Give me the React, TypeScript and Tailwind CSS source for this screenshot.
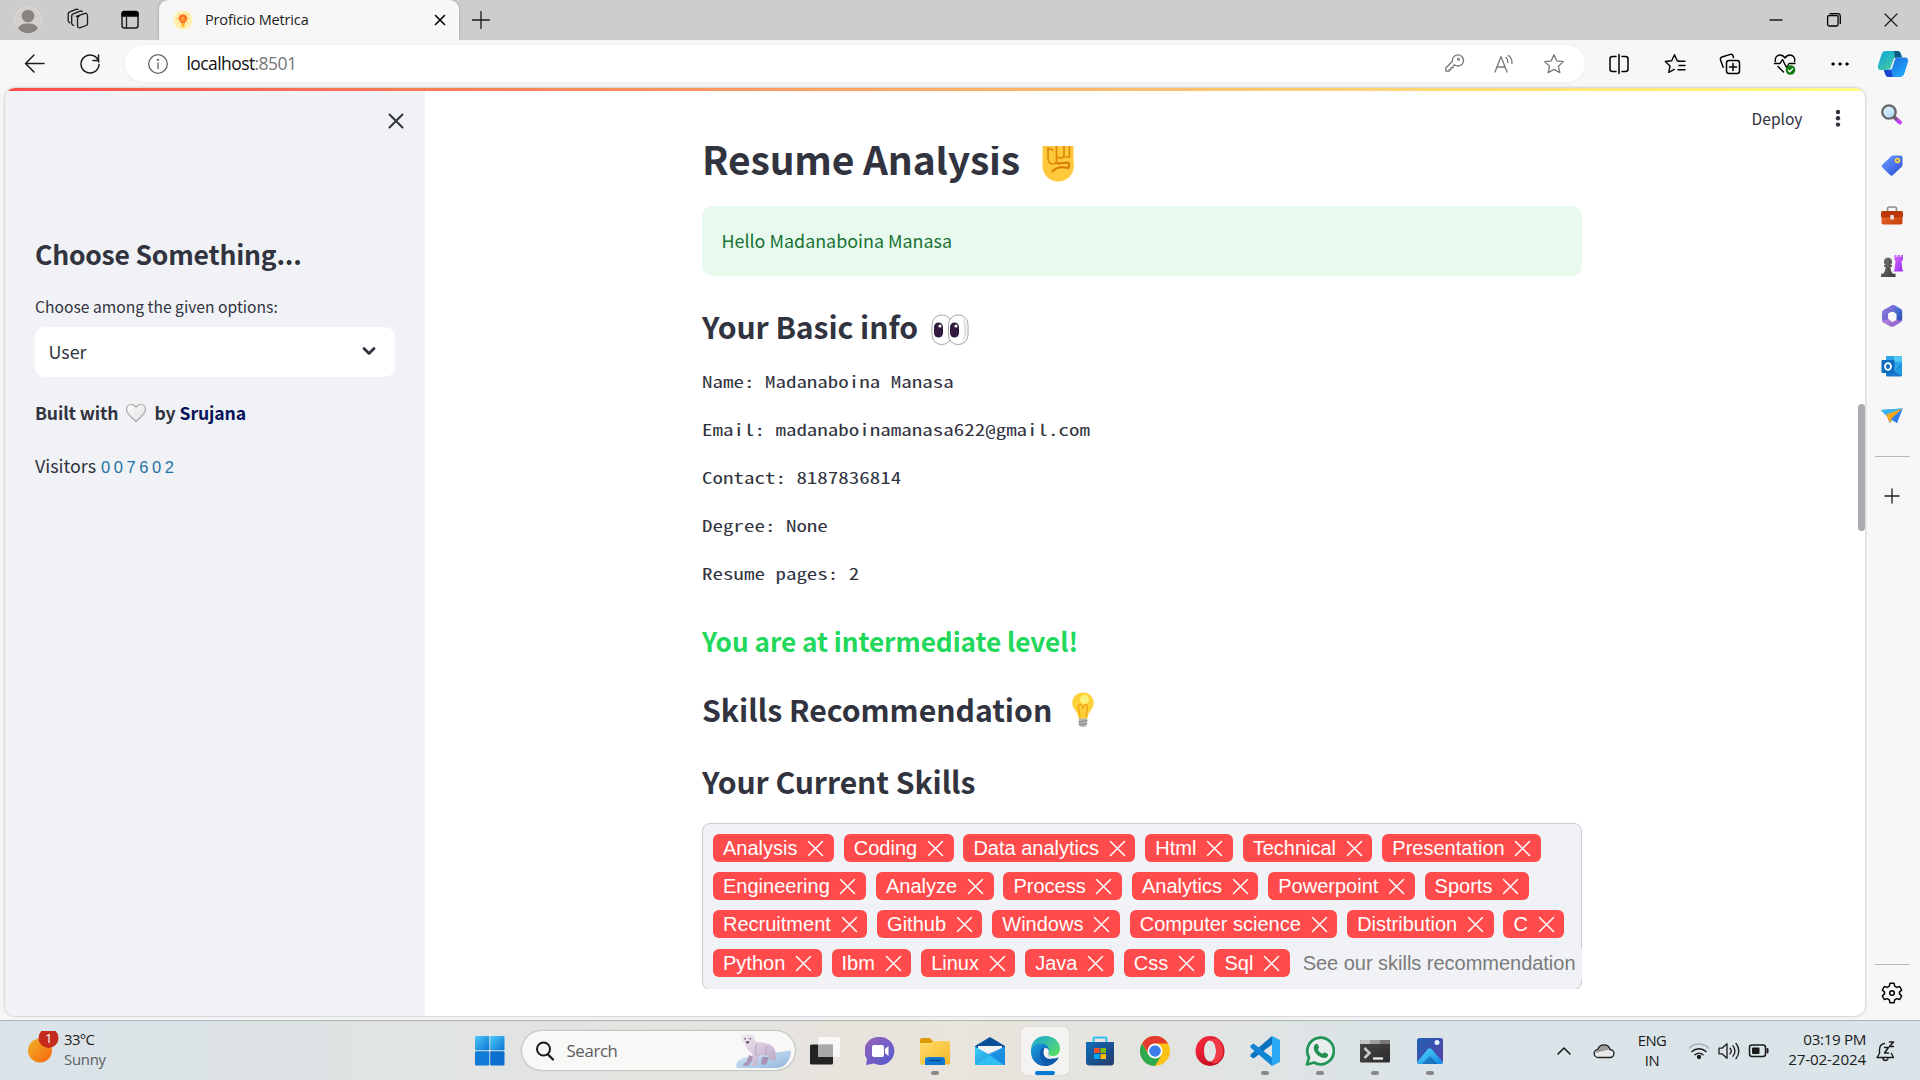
import type { ReactNode } from "react";

const SOURCE = "font-['Noto_Sans_CJK_SC',sans-serif]";
const SEGOE = "font-['Open_Sans',sans-serif]";

type IconProps = { w?: number; h?: number; children: ReactNode; className?: string };

/** Line icon drawn on a canvas whose units are CSS pixels. */
function Line({ w = 24, h = 24, children, className = "" }: IconProps) {
  return (
    <svg
      width={w}
      height={h}
      viewBox={`0 0 ${w} ${h}`}
      fill="none"
      stroke="currentColor"
      strokeWidth="1.3"
      strokeLinecap="round"
      strokeLinejoin="round"
      className={`shrink-0 ${className}`}
    >
      {children}
    </svg>
  );
}

function Art({ w = 30, h = 30, children, className = "" }: IconProps) {
  return (
    <svg width={w} height={h} viewBox={`0 0 ${w} ${h}`} className={`shrink-0 ${className}`}>
      {children}
    </svg>
  );
}

function Gradients() {
  const list: [string, string, string][] = [
    ["gSun", "#f0b429", "#f7630c"],
    ["gWin", "#4cc9f7", "#0a74d6"],
    ["gChat", "#9a63b8", "#4f5bd0"],
    ["gFolder", "#ffdc6b", "#f7b928"],
    ["gMail", "#40d0f5", "#1480d8"],
    ["gStore", "#0f6cbd", "#243a66"],
    ["gEdgeTop", "#1ba4dc", "#5de45a"],
    ["gEdgeBody", "#1a9de0", "#0c4a9c"],
    ["gOpera", "#ff3040", "#b00018"],
    ["gPhotos", "#1f62b5", "#5a3fa6"],
    ["gMount", "#4fdcff", "#1287e0"],
    ["gTerm", "#4a4a4a", "#2b2b2b"],
    ["gTag", "#6aa2ff", "#2c49dc"],
    ["gBox", "#ef7034", "#c23c08"],
    ["gRook", "#d46bff", "#9a2ef0"],
    ["gPawn", "#777777", "#3c3c3c"],
    ["gLens", "#e4f6ff", "#a9d6f4"],
    ["gM1", "#5b9cf0", "#2f3fae"],
    ["gM2", "#8f7fe0", "#5a58c8"],
    ["gM3", "#c58be0", "#7a58c8"],
    ["gCop1", "#0aa5d8", "#58d39a"],
    ["gCop2", "#1f5bd8", "#1fb5ff"],
    ["gBear", "#f2e8f2", "#b9a4c4"],
    ["gIce", "#dcebf8", "#8fb6de"],
    ["gHeart", "#ffffff", "#dedede"],
  ];
  return (
    <svg width="0" height="0" className="absolute">
      <defs>
        {list.map(([id, a, b]) => (
          <linearGradient key={id} id={id} x1="0" y1="0" x2="1" y2="1">
            <stop offset="0" stopColor={a} />
            <stop offset="1" stopColor={b} />
          </linearGradient>
        ))}
      </defs>
    </svg>
  );
}

function TabStrip() {
  return (
    <div className="flex h-10 shrink-0 items-center bg-[#cdcdcd] text-[#1b1b1b]">
      <div className="flex w-[159px] items-center pl-[14px]">
        <Art w={28} h={28}>
          <circle cx="14" cy="14" r="13.5" fill="#d3d0cb" stroke="#dedbd7" />
          <circle cx="14" cy="10" r="6.3" fill="#8a8480" />
          <path d="M4 22.500C5.500 18.800 9 17.500 14 17.500s8.500 1.300 10 5A13 13 0 0 1 4 22.500z" fill="#8a8480" />
        </Art>
        <Line w={24} h={24} className="ml-[24px]">
          <path d="M9.300 8.700l8-2.700a2 2 0 0 1 3.200 1.500v8.500a2 2 0 0 1-1.300 1.800l-6 2.200a2 2 0 0 1-2.700-1.800v-7.400a2.300 2.300 0 0 1 1.500-2.200z" transform="translate(1 -.3)" />
          <path d="M7.500 17.300l-.8-.4a2 2 0 0 1-1-1.800V8a2.300 2.300 0 0 1 1.500-2.200l7-2.700a2 2 0 0 1 2 .4" />
          <path d="M3.800 14.800l-.8-.6a2 2 0 0 1-.8-1.600V6a2.300 2.300 0 0 1 1.500-2.200L10 1.300a2 2 0 0 1 2 .3" />
        </Line>
        <Line w={20} h={20} className="ml-[30px]">
          <rect x="2" y="2" width="16" height="16" rx="2.500" strokeWidth="1.500" />
          <path d="M2 3.500C2 2 3 1.500 4 1.500h12c1 0 2 .5 2 2V6H2z" fill="#000" stroke="#000" />
          <path d="M6.500 6v12" />
        </Line>
      </div>
      <div className="flex h-10 w-[300px] items-center rounded-t-[9px] bg-[#f7f7f7] pr-[12.500px] pl-[14px] shadow-[0_0_3px_rgba(0,0,0,0.25)]">
        <Art w={20} h={20}>
          <circle cx="10" cy="10" r="9.500" fill="#fff0ae" />
          <path d="M10 4.200a4.300 4.300 0 0 0-2.300 7.900l.5 1.400h3.600l.5-1.400A4.300 4.300 0 0 0 10 4.200z" fill="#ff6d1f" />
          <path d="M9 11V8.300a1 1 0 0 1 2 0V11" stroke="#ffd04f" fill="none" />
          <path d="M8.300 13.800h3.400v1.800a1.700 1.700 0 0 1-3.400 0z" fill="#fbb82a" />
          <path d="M3.800 8.500h1M15.200 8.500h1M5.500 4.300l.7.700M14.500 4.300l-.7.700M5.500 12.500l.7-.6M14.500 12.500l-.7-.6" stroke="#ff8c2e" />
        </Art>
        <span className={`${SEGOE} ml-[12px] text-[14.500px] tracking-[-0.15px]`}>Proficio Metrica</span>
        <Line w={14} h={14} className="ml-auto text-black">
          <path d="M2.500 2.500l9 9M11.500 2.500l-9 9" strokeWidth="1.600" />
        </Line>
      </div>
      <Line w={20} h={20} className="ml-[12px]">
        <path d="M10 1.500v17M1.500 10h17" />
      </Line>
      <div className="ml-auto flex items-center gap-[41.500px] pr-[21px]">
        <Line w={16} h={16} className="text-black">
          <path d="M1.500 8h13" strokeLinecap="butt" />
        </Line>
        <Line w={16} h={16} className="text-black">
          <rect x="1.600" y="3.500" width="10.500" height="10.500" rx="1.500" />
          <path d="M4 1.600h7.500a2.800 2.800 0 0 1 2.800 2.800V11.500" />
        </Line>
        <Line w={16} h={16}>
          <path d="M2 2l12 12M14 2L2 14" strokeWidth="1.200" />
        </Line>
      </div>
    </div>
  );
}

function Toolbar() {
  return (
    <div className="flex h-12 shrink-0 items-center bg-[#f7f7f7] pr-[12px] pb-[1px] text-[#1b1b1b]">
      <Line w={24} h={24} className="ml-[23px]">
        <path d="M21 11.500H2.500M11 3l-8.500 8.500L11 20" strokeWidth="1.500" />
      </Line>
      <Line w={24} h={24} className="ml-[31px]">
        <path d="M20.800 10A9 9 0 1 0 21 12.500M20.500 3v5.500H15" strokeWidth="1.500" />
      </Line>
      <div className="ml-[23px] flex h-[37px] w-[1460px] items-center rounded-full bg-white pr-[20px] pl-[21px] text-[#777] shadow-[0_0_4px_rgba(0,0,0,0.06)]">
        <Line w={22} h={22} className="ml-px text-[#666]">
          <circle cx="11" cy="11" r="9.300" />
          <path d="M11 10v5.500" />
          <circle cx="11" cy="6.800" r=".5" fill="currentColor" />
        </Line>
        <span className={`${SEGOE} ml-[17.500px] text-[17.500px] tracking-[-0.58px]`}>
          <span className="text-[#111]">localhost</span>:8501
        </span>
        <div className="ml-auto flex items-center gap-[28px]">
          <Line w={22} h={22}>
            <path d="M13.500 3.200a5.500 5.500 0 1 1-2 9.500l-1.500 1.500v1.500H8v2H6.200v1.500H2.800V16l6.500-6.500a5.500 5.500 0 0 1 4.200-6.300z" transform="translate(0 -1)" />
            <circle cx="15.500" cy="6.200" r=".9" />
          </Line>
          <Line w={22} h={22}>
            <path d="M2 19L8 3.500 14 19M4 14h8M13 4.500a6 6 0 0 1 2 5M15.500 2.500a9.500 9.500 0 0 1 3.500 8" />
          </Line>
          <Line w={22} h={22}>
            <path d="M11 1.800l2.800 6 6.500.8-4.800 4.500 1.300 6.500-5.800-3.200-5.800 3.200 1.300-6.500L1.700 8.600l6.500-.8z" />
          </Line>
        </div>
      </div>
      <div className="flex w-[323px] items-center pl-[23px] text-black">
        <Line w={22} h={22}>
          <path d="M11 1.500v19M8 3.500H4.500a2.500 2.500 0 0 0-2.500 2.500v10a2.500 2.500 0 0 0 2.500 2.500H8M14 3.500h3.500A2.500 2.500 0 0 1 20 6v10a2.500 2.500 0 0 1-2.500 2.500H14" strokeWidth="1.500" />
        </Line>
        <Line w={24} h={24} className="ml-[34px]">
          <path d="M14.500 9l-1.300-.3-2.700-6-2.800 6-6.400.8 4.700 4.500-1.200 6.400 5.500-3M14 9.200h7M15 13.500h6M14 17.800h7" strokeWidth="1.400" />
        </Line>
        <Line w={24} h={24} className="ml-[30px]">
          <rect x="8.500" y="8.500" width="13" height="13" rx="2.500" strokeWidth="1.500" />
          <path d="M15 11.500v7M11.500 15h7M15.500 5.500l-.6-1.800a2 2 0 0 0-2.500-1.300L4 5a2.300 2.300 0 0 0-1.500 2.900l2.700 7.300" strokeWidth="1.500" />
        </Line>
        <Line w={24} h={24} className="ml-[31px]">
          <path d="M2.500 9.500C1.500 5.800 4 3 7 3c2.300 0 3.800 1.300 5 3 1.200-1.700 2.700-3 5-3 3 0 5.500 2.800 4.500 6.500M1.500 11.500H7l2.500-4 4 8 2.500-4h6M5 14.500l5.500 5.500" strokeWidth="1.400" />
          <circle cx="17.500" cy="18" r="4.800" fill="#107c10" stroke="none" />
          <path d="M15.300 18.200l1.500 1.500 2.800-3" stroke="#fff" />
        </Line>
        <Line w={20} h={20} className="ml-[33px]">
          <g fill="currentColor" strokeWidth=".6">
            <circle cx="3" cy="10" r="1.300" />
            <circle cx="10" cy="10" r="1.300" />
            <circle cx="17" cy="10" r="1.300" />
          </g>
        </Line>
        <Art w={32} h={28} className="ml-[26.500px]">
          <path d="M9 1h11a4 4 0 0 1 3.800 3l1 3.500h-5c-2 0-3 1-3.600 3L14 16.500c-.8 2.500-2 3.500-4.500 3.500H4c-2.500 0-3.700-2-3-4.500L4.500 4.500C5.300 2 6.800 1 9 1z" fill="url(#gCop1)" />
          <path d="M17 1h4a4 4 0 0 1 3 3l1 3.500h-5l-2 1z" fill="#0b5d86" />
          <path d="M23 27H12a4 4 0 0 1-3.800-3L7 20.500h4.500c2 0 3.200-1 3.900-3l2-6.500c.8-2.500 2-3.500 4.500-3.500H28c2.500 0 3.700 2 3 4.500L27.500 23c-.8 2.500-2.300 4-4.500 4z" fill="url(#gCop2)" />
          <path d="M7 20h4.500l2-.7L16 27h-4a4 4 0 0 1-3.800-3z" fill="#1746cf" />
        </Art>
      </div>
    </div>
  );
}

function Sidebar() {
  return (
    <aside className={`${SOURCE} flex w-[420px] shrink-0 flex-col bg-[#f0f2f6] px-[30px] text-[#31333f]`}>
      <div className="mt-[19.500px] flex justify-end">
        <Line w={20} h={20} className="-mr-[10.500px]">
          <path d="M3.500 3.500l13 13M16.500 3.500l-13 13" strokeWidth="2" />
        </Line>
      </div>
      <h2 className="mt-[103px] h-10 text-[26.500px] leading-10 font-semibold tracking-[-0.2px]">Choose Something...</h2>
      <p className="mt-[23px] h-5 text-[15.650px] leading-5">Choose among the given options:</p>
      <div className="mt-[10.500px] flex h-[50px] items-center justify-between rounded-[10px] bg-white pr-[18px] pb-[2px] pl-[13.500px]">
        <span className="text-[17.900px] leading-6">User</span>
        <Line w={16} h={16}>
          <path d="M3 5.500l5 5 5-5" strokeWidth="2.800" />
        </Line>
      </div>
      <p className="mt-[26px] flex h-5 items-center text-[17.600px] leading-5 font-semibold tracking-[-0.12px]">
        <span>Built with</span>
        <Art w={22} h={20} className="mx-[7px]">
          <path d="M11 18.500C5.500 14 1.500 10.500 1.500 6.500c0-2.800 2-5 4.700-5 2 0 3.700 1 4.800 2.800 1.100-1.800 2.800-2.800 4.800-2.800 2.700 0 4.700 2.200 4.700 5 0 4-4 7.500-9.500 12z" fill="url(#gHeart)" stroke="#a9a9a9" strokeWidth="1.200" />
        </Art>
        <span>by</span>
        <span className="ml-[4px] text-[#05115a]">Srujana</span>
      </p>
      <p className="mt-[31.500px] flex h-5 items-center text-[17.900px] leading-5">
        Visitors
        <span className="mt-[4px] ml-[5px] font-['Liberation_Sans',sans-serif] text-[16.500px] tracking-[3.550px] text-[#2273a5]">007602</span>
      </p>
    </aside>
  );
}

function Fist() {
  return (
    <Art w={34} h={54} className="mt-[2px] ml-[21.500px]">
      <path d="M1.500 2h31v26.500l.5 5c0 9-7 16-16 16S1.500 42.500 1.500 33.500z" fill="#ffc83d" />
      <path d="M7 15v10c0 4.500 1.500 7 4.500 7s4-1.500 4-3.500V13M15.500 23c0 2.500 1.500 3 3.500 3s4-.5 4-3V13M23 25h5.500V13M7 19c1-3 4-3 5 0" fill="none" stroke="#dd8a06" strokeWidth="1.700" />
      <path d="M15.500 31c4 1.500 7-.5 11.500-.5 1.500.5 1.500 3.500 0 6.500M27 36c-7-1.500-12-1-16 4" fill="none" stroke="#d67d00" strokeWidth="2" />
    </Art>
  );
}

function Eyes() {
  return (
    <Art w={38} h={32} className="mt-[8px] ml-[13px]">
      <g stroke="#a5a5a5" fill="#fff">
        <rect x="1" y="1" width="19.500" height="29.500" rx="9.500" />
        <rect x="17.500" y="1" width="19.500" height="29.500" rx="9.500" />
      </g>
      <path d="M31 2.500c6 5 6 22 0 26.500 3-6 3-21 0-26.500z" fill="#ddd" />
      <rect x="3" y="8.500" width="9" height="15" rx="4.500" fill="#321b41" />
      <rect x="19" y="8.500" width="9" height="15" rx="4.500" fill="#321b41" />
      <circle cx="9" cy="12" r="1.600" fill="#fff" />
      <circle cx="25" cy="12" r="1.600" fill="#fff" />
    </Art>
  );
}

function Bulb() {
  return (
    <Art w={24} h={38} className="mt-[2px] ml-[19px]">
      <path d="M12 1.500C6 1.500 1.300 6 1.300 12c0 5 4.500 8 5.500 12 .4 2 .7 3.500 1.500 4h7.400c.8-.5 1.100-2 1.500-4 1-4 5.500-7 5.500-12C22.700 6 18 1.500 12 1.500z" fill="#fdd13a" />
      <path d="M9 26c0-5-2-8-1.500-11 .5-2 3-2 3.500 0l1 2 1-2c.5-2 3-2 3.500 0 .5 3-1.500 6-1.500 11" fill="none" stroke="#f5a51b" strokeWidth="1.400" />
      <circle cx="13.500" cy="8.500" r="4.500" fill="#fff27a" />
      <path d="M7.800 27.500h8.400v6l-2 2.500H9.800l-2-2.500z" fill="#b4b4b4" />
      <path d="M7.500 31l9-1.500M7.800 34l8-1.500" stroke="#888" strokeWidth="1" />
    </Art>
  );
}

function Chip({ label }: { label: string }) {
  return (
    <span className="flex h-7 items-center rounded-[6px] bg-[#ff4b4b] pr-[9.700px] pl-[10px] whitespace-nowrap text-white">
      {label}
      <Line w={17} h={17} className="ml-[9.700px]">
        <path d="M1.500 1.500l14 14M15.500 1.500l-14 14" strokeWidth="1.500" />
      </Line>
    </span>
  );
}

const skillRows = [
  ["Analysis", "Coding", "Data analytics", "Html", "Technical", "Presentation"],
  ["Engineering", "Analyze", "Process", "Analytics", "Powerpoint", "Sports"],
  ["Recruitment", "Github", "Windows", "Computer science", "Distribution", "C"],
  ["Python", "Ibm", "Linux", "Java", "Css", "Sql"],
];

const info = [
  "Name: Madanaboina Manasa",
  "Email: madanaboinamanasa622@gmail.com",
  "Contact: 8187836814",
  "Degree: None",
  "Resume pages: 2",
];

function Report() {
  return (
    <div className={`${SOURCE} ml-[277px] flex w-[880px] flex-col text-[#31333f]`}>
      <h1 className="-mt-[18px] flex h-[60px] items-center text-[39px] leading-[60px] font-semibold tracking-[-0.15px]">
        Resume Analysis
        <Fist />
      </h1>
      <div className="mt-[18px] flex h-[70px] items-center rounded-[10px] bg-[#e8f9ee] px-[19.500px] pb-[2px] text-[17.900px] leading-6 text-[#177233]">
        Hello Madanaboina Manasa
      </div>
      <h2 className="mt-[29.500px] flex h-10 items-center text-[30.200px] leading-10 font-semibold tracking-[-0.1px]">
        Your Basic info
        <Eyes />
      </h2>
      <div className="mt-[12px] font-['Noto_Sans_Mono_CJK_SC','Liberation_Mono',monospace] text-[15.700px]">
        {info.map((line) => (
          <p key={line} className="h-12 w-max origin-left scale-x-[1.337] leading-[48px] whitespace-pre">
            {line}
          </p>
        ))}
      </div>
      <h3 className="mt-[23px] h-10 text-[26.200px] leading-10 font-semibold tracking-[-0.05px] text-[#21d85b]">
        You are at intermediate level!
      </h3>
      <h2 className="mt-[28px] flex h-10 items-center text-[30.200px] leading-10 font-semibold tracking-[-0.02px]">
        Skills Recommendation
        <Bulb />
      </h2>
      <h2 className="mt-[32px] h-10 text-[30.200px] leading-10 font-semibold tracking-[-0.1px]">Your Current Skills</h2>
      <div className="mt-[22.500px] h-[166px] overflow-hidden font-['Liberation_Sans',sans-serif] text-[20px] leading-7">
        <div className="flex h-[167px] flex-col gap-[10px] rounded-[8px] border border-[#c9cbd0] bg-[#f0f2f6] pt-[10px] pl-[10px]">
          {skillRows.map((row, i) => (
            <div key={i} className="flex h-7 items-center gap-[9.900px] last:mt-px">
              {row.map((s) => (
                <Chip key={s} label={s} />
              ))}
              {i === 3 && (
                <span className="-mr-px h-[31px] flex-1 bg-[#f0f2f6] pl-[3px] leading-[31px] tracking-[-0.02px] whitespace-nowrap text-[#7b7b7b]">
                  See our skills recommendation
                </span>
              )}
            </div>
          ))}
        </div>
      </div>
    </div>
  );
}

function Page() {
  return (
    <div className="flex h-[928px] w-[1860px] flex-col overflow-hidden rounded-[10px] bg-white shadow-[0_0_3px_rgba(0,0,0,0.3)]">
      <div className="h-[3px] shrink-0 bg-linear-to-r from-[#ff4b4b] to-[#fffd80]" />
      <div className="flex min-h-0 flex-1">
        <Sidebar />
        <main className="flex min-w-0 flex-1 flex-col">
          <header className={`${SOURCE} flex h-[55px] shrink-0 items-center justify-end pr-[19.500px] pb-[2px] text-[#31333f]`}>
            <span className="text-[15.600px] leading-5">Deploy</span>
            <Art w={16} h={20} className="ml-[27px]">
              <circle cx="8" cy="4" r="2.200" fill="#31333f" />
              <circle cx="8" cy="10.300" r="2.200" fill="#31333f" />
              <circle cx="8" cy="16.600" r="2.200" fill="#31333f" />
            </Art>
          </header>
          <div className="flex min-h-0 flex-1 justify-between overflow-hidden">
            <Report />
            <div className="mt-[258px] h-[127px] w-[7px] rounded-full bg-[#acabb1]" />
          </div>
        </main>
      </div>
    </div>
  );
}

function EdgeRail() {
  return (
    <div className="flex w-[55px] flex-col items-center pr-[2px] text-[#1b1b1b]">
      <div className="mt-[15px] flex flex-col gap-[26.200px]">
        <Art w={24} h={24}>
          <path d="M14.500 14.500l5.500 5" stroke="#c13cf0" strokeWidth="4" strokeLinecap="round" />
          <path d="M14 14l3 3" stroke="#666" strokeWidth="2.500" />
          <circle cx="9" cy="9" r="6.700" fill="url(#gLens)" stroke="#666" strokeWidth="2.300" />
        </Art>
        <Art w={24} h={24}>
          <path d="M2.500 11.500L11 3.500c.8-.8 1.500-1 2.500-1h7c1.200 0 2 .8 2 2v7c0 1-.3 1.700-1 2.400l-8.500 8c-1 1-2 1-3 0l-7.500-7.400c-1-1-1-2 0-3z" fill="url(#gTag)" />
          <circle cx="17.500" cy="7.500" r="2" fill="#6d7ab5" stroke="#ffd83d" strokeWidth="1.600" />
        </Art>
        <Art w={24} h={24}>
          <path d="M7.500 8V6c0-1.500 1-2 2-2h5c1 0 2 .5 2 2v2" fill="none" stroke="#8d8d8d" strokeWidth="1.600" />
          <rect x="1.500" y="11" width="21" height="10.500" rx="1.800" fill="url(#gBox)" />
          <rect x="1" y="8" width="22" height="6.500" rx="1.500" fill="#b9390b" />
          <rect x="10.300" y="12" width="3.600" height="4.500" rx=".8" fill="#e6e6e6" />
        </Art>
        <Art w={24} h={24}>
          <path d="M14.500 1h1.800v1.800h1.500V1h2v1.800h1.500V1H23v5l-1.500 1.200.8 8 1 2.300H13.500l1-2.300 1-8L14.500 6z" fill="url(#gRook)" />
          <path d="M8 3.500A4.200 4.200 0 0 0 5.500 11H4v1.800h1.500c0 3-.8 5.500-2.500 7H1V23h14.500v-3.200H13c-1.700-1.500-2.500-4-2.500-7H12V11h-1.500A4.200 4.200 0 0 0 8 3.500z" fill="url(#gPawn)" />
        </Art>
        <Art w={24} h={24}>
          <path d="M12 1.300c1-.6 2-.4 3 .2l5.500 3.200c1 .6 1.700 1.600 1.700 2.800v9c-2 2.300-4 1-5.700-.3V10L8.500 5.500c0-2 1.500-3 3.500-4.200z" fill="url(#gM1)" />
          <path d="M12.500 1L4 5.700c-1.300.7-2 1.600-2 3v7.800c0 3 4.500 3 6 1V9.500L16 6c0-2.500-1-5-3.500-5z" fill="url(#gM2)" />
          <path d="M2 15c0 2 .6 3 2 3.800l5.500 3.300c1.700 1 3.300 1 5 0l5.500-3.300c1.400-.8 2-1.800 2-3.800-1.500 2-3.500 2-5.500 1L12 18l-4-3.500C6 17 3 17.500 2 15z" fill="url(#gM3)" />
          <circle cx="12.200" cy="12" r="4" fill="#f7f7f7" />
        </Art>
        <Art w={24} h={24}>
          <rect x="6" y="2" width="16" height="13" rx="1" fill="#2ba5ea" />
          <path d="M14 2h8v6h-8z" fill="#50c7f5" />
          <path d="M6 10l8.500 6L22 10v11a1.500 1.500 0 0 1-1.500 1.500H7.500A1.500 1.500 0 0 1 6 21z" fill="#1a78cc" />
          <path d="M22 11l-8.500 6 8.500 5z" fill="#1f9ae5" />
          <rect x="1.500" y="6" width="13" height="13" rx="1.300" fill="#0f6cbd" />
          <ellipse cx="8" cy="12.500" rx="3" ry="3.400" fill="none" stroke="#fff" strokeWidth="1.800" />
        </Art>
        <Art w={24} h={24}>
          <path d="M1 6l21.500-1.500L17 19l-4.500-3-3 3-2-6z" fill="#2392e8" />
          <path d="M1 6l21.500-1.500L7.500 12z" fill="#36b5f2" />
          <path d="M6 10.500l16.500-6L9.500 18.500z" fill="#f6a81c" />
          <path d="M22.500 4.500L17 19l-6-4z" fill="#2f7ff0" />
        </Art>
      </div>
      <div className="mt-[28px] ml-[2px] h-px w-[35px] bg-[#b8b8b8]" />
      <Line w={16} h={16} className="mt-[31px]">
        <path d="M8 1v14M1 8h14" />
      </Line>
      <div className="mt-auto ml-[2px] h-px w-[35px] bg-[#b8b8b8]" />
      <Line w={24} h={24} className="mt-[16px] mb-[15px] text-black">
        <path d="M10 2.200h4l.7 3 2 1.200 3-.9 2 3.500-2.200 2.100v1.800l2.200 2.100-2 3.500-3-.9-2 1.200-.7 3h-4l-.7-3-2-1.200-3 .9-2-3.500 2.200-2.100v-1.800L2.300 9l2-3.500 3 .9 2-1.200z" strokeWidth="1.500" />
        <circle cx="12" cy="12" r="2.300" strokeWidth="1.500" />
      </Line>
    </div>
  );
}

type TaskProps = { icon: ReactNode; state?: "idle" | "open" | "active" };

function Task({ icon, state = "idle" }: TaskProps) {
  return (
    <div
      className={
        state === "active"
          ? "relative mx-[3.500px] flex h-12 w-12 items-center justify-center rounded-[5px] bg-[#f5f3f1] shadow-[0_0_1px_rgba(0,0,0,0.3)]"
          : "relative mx-[3.500px] flex h-12 w-12 items-center justify-center"
      }
    >
      {icon}
      {state === "open" && <span className="absolute bottom-0 h-1 w-2 rounded-full bg-[#888]" />}
      {state === "active" && <span className="absolute bottom-0 h-1 w-5 rounded-full bg-[#0078d4]" />}
    </div>
  );
}

function Bear() {
  return (
    <Art w={58} h={36} className="ml-auto">
      <path d="M1 33c1-6 5-8 12-9 14-1 26-5 43-6.500 0 8-5 17.500-14 17.500H5c-3 0-4-.5-4-2z" fill="url(#gIce)" />
      <path d="M27 24l-1 6.500c1 1.500 4 1.500 5.500.5L34 24z" fill="#a893b6" />
      <path d="M14 22l-2 6-4 3.500c.5 1.700 4 2 6 .8L19 24z" fill="#ab97b8" />
      <path d="M6.500 5C5.500 3 7 1.300 9 2c2.500-1.200 5.500-1.200 7.500 0 2-.7 3.500 1 2.500 3 .8 2.300 1.500 3.500 3.500 4C27 9.500 33 10 37 13c3.500 3 3.800 7.500 4 11.500.2 1.700-.8 3-2.500 3l-3-.3c-.5-2-1.500-4-3.500-5-3-.2-6 .3-8.500 1.300l-1.500 8c-.5 1.800-4 2.300-6.500 1l2-3.500v-8c-2-2-5-4-7-8-1-2.500-3-4.500-4-8z" fill="url(#gBear)" />
      <path d="M22 11c-2 4-2 8 0 12M33 14c-3 2-3 5-1 8" stroke="#b39fc0" fill="none" />
      <circle cx="10" cy="5.800" r=".8" fill="#453c52" />
      <circle cx="15.300" cy="5.800" r=".8" fill="#453c52" />
      <ellipse cx="12.600" cy="9.300" rx="1.600" ry="1.100" fill="#453c52" />
    </Art>
  );
}

function Apps() {
  return (
    <>
      <Task
        icon={
          <Art>
            <rect x="0" y="8.500" width="23" height="20" rx="1.500" fill="#232323" />
            <rect x="8" y="1" width="22" height="20" rx="1.500" fill="#fff" fillOpacity=".75" />
            <path d="M8 8.500h15V21H9.500A1.500 1.500 0 0 1 8 19.500z" fill="#a9a9a9" />
          </Art>
        }
      />
      <Task
        icon={
          <Art>
            <path d="M15 1a14 14 0 1 1-6 26.500L1 29l1-6A14 14 0 0 1 15 1z" fill="url(#gChat)" />
            <rect x="7" y="9" width="12" height="12" rx="2" fill="#fff" />
            <path d="M20 13l3.500-3v10L20 17z" fill="#fff" />
          </Art>
        }
      />
      <Task
        state="open"
        icon={
          <Art>
            <path d="M0 4a2 2 0 0 1 2-2h8l3 3v6H0z" fill="#dc9a08" />
            <path d="M0 7h11l2-2h15a2 2 0 0 1 2 2v20a1.500 1.500 0 0 1-1.500 1.500h-27A1.500 1.500 0 0 1 0 27z" fill="url(#gFolder)" />
            <path d="M5 29v-5a3 3 0 0 1 3-3h14a3 3 0 0 1 3 3v5z" fill="#0f78d4" />
            <path d="M9 24.500h12" stroke="#0a4c8f" strokeWidth="1.500" />
          </Art>
        }
      />
      <Task
        icon={
          <Art>
            <path d="M0 10L15 1l15 9v5H0z" fill="#0d4f96" />
            <path d="M3 10h24v6L15 22 3 16z" fill="#f3f3f3" />
            <path d="M0 10.500L15 19 30 10.500V28a1 1 0 0 1-1 1H1a1 1 0 0 1-1-1z" fill="url(#gMail)" />
            <path d="M15 19L0 29h29z" fill="#2fbdf2" />
            <path d="M30 10.500V28a1 1 0 0 1-1 1L13 18z" fill="#158ae0" fillOpacity=".75" />
          </Art>
        }
      />
      <Task
        state="active"
        icon={
          <Art>
            <path d="M1 14C1 6 7 0 15.500 0 24 0 30 6 30 12.500c0 5-3 7.500-7 7.500-3.500 0-5-1.500-4.500-3 1-2.500.5-5.500-3-6C9 10 3 11 1 14z" fill="url(#gEdgeTop)" />
            <path d="M1 14c1-4.500 6-7 11-6.500 5.500.5 8 4.500 6.500 9-1 3 1 6 5 6 2 0 3.500-.5 5-1.300C26 27 21 30 15 30 7 30 1 24 1 16z" fill="url(#gEdgeBody)" />
            <path d="M13 11.500c-4 3-4.500 9-.5 13 3 3 8 3.500 12 1.500 2-1 3.500-3 4-4.500-4 2.500-9 2-11.500-1-2-2.500-2-5-.8-7.500-1-.8-2-1.200-3.200-1.500z" fill="#0b58ac" />
            <path d="M14.500 12c3-.5 5 2 4 4.700-1 2.500.3 5.800 5 5.800-4 1-8 .2-9.300-3-1-2.500-1-5 .3-7.500z" fill="#f5f3f1" />
          </Art>
        }
      />
      <Task
        icon={
          <Art>
            <path d="M8.500 6V3a1.500 1.500 0 0 1 1.500-1.500h10A1.500 1.500 0 0 1 21.500 3v3" fill="none" stroke="#35b9f1" strokeWidth="2" />
            <path d="M1 6h28v20a3.500 3.500 0 0 1-3.500 3.500h-21A3.500 3.500 0 0 1 1 26z" fill="url(#gStore)" />
            <path d="M9 12h5.500v5H9z" fill="#f25022" />
            <path d="M15.500 12H21v5h-5.500z" fill="#7fba00" />
            <path d="M9 18h5.500v5H9z" fill="#00a4ef" />
            <path d="M15.500 18H21v5h-5.500z" fill="#ffb900" />
          </Art>
        }
      />
      <Task
        icon={
          <Art>
            <circle cx="15" cy="15" r="15" fill="#fbc116" />
            <path d="M2 7.500A15 15 0 0 1 28 7.500H15L9 18.500z" fill="#e33b2e" />
            <path d="M2 7.500A15 15 0 0 0 15 30l6.500-11.300-6.500 3.800-6.500-3.800z" fill="#2da94f" />
            <circle cx="15" cy="15" r="7.500" fill="#fff" />
            <circle cx="15" cy="15" r="5.800" fill="#3b7de9" />
          </Art>
        }
      />
      <Task
        icon={
          <Art>
            <path d="M15 0a14.500 15 0 1 0 0 30 14.500 15 0 1 0 0-30zm0 4.500c3.500 0 6 4.500 6 10.500s-2.500 10.500-6 10.500S9 21 9 15 11.500 4.500 15 4.500z" fill="url(#gOpera)" fillRule="evenodd" />
            <path d="M15 4.500c2-2 6-2.500 8.500-.5A15 15 0 0 1 23.500 26c-2.500 2-6.500 1.500-8.500-.5 3.500 0 6-4.500 6-10.500S18.500 4.500 15 4.500z" fill="#f23a44" />
          </Art>
        }
      />
      <Task
        state="open"
        icon={
          <Art>
            <path d="M22 8.500L3.500 22.500.5 20.500v-2L22 0z" fill="#0b72bd" />
            <path d="M22 21.500L3.500 7.500.5 9.500v2L22 30z" fill="#1286d6" />
            <path d="M22 0l8 4v22l-8 4z" fill="#29a9f3" />
          </Art>
        }
      />
      <Task
        state="open"
        icon={
          <Art>
            <path d="M2 28.500l2-7A13.300 13.300 0 1 1 9 26.500z" fill="#f4f6f4" fillOpacity=".5" stroke="#1f9455" strokeWidth="2.700" strokeLinejoin="round" />
            <path d="M10 8.500c1-1.200 2.500-1 3 .2l1 2.500c.2.800-1.300 2-1 2.600 1 2 2.300 3 4.300 4 .8.300 1.700-1.800 2.500-1.400l2.700 1.300c1 .5.500 2.300-.3 3.200-1.700 1.900-5.200 1.400-8.700-1.100-3.500-2.600-6.500-7.500-3.500-11.300z" fill="#1f8f52" />
          </Art>
        }
      />
      <Task
        state="open"
        icon={
          <Art>
            <rect x="0" y="4" width="30" height="22.500" rx="1.500" fill="url(#gTerm)" />
            <path d="M0 8V5.500A1.500 1.500 0 0 1 1.500 4H10v4z" fill="#c5c5c5" />
            <path d="M10 4h10v4H10z" fill="#9c9c9c" />
            <path d="M20 4h8.500A1.500 1.500 0 0 1 30 5.500V8H20z" fill="#777" />
            <path d="M4.500 12l5 5-5 5" fill="none" stroke="#ccc" strokeWidth="2.500" />
            <path d="M13 22.500h10" stroke="#f5f5f5" strokeWidth="2.200" />
          </Art>
        }
      />
      <Task
        state="open"
        icon={
          <Art>
            <rect x="2" y="2" width="26" height="26" rx="2.500" fill="url(#gPhotos)" />
            <path d="M2 26l11-13a2.500 2.500 0 0 1 3.500 0L28 26c-.5 1.300-1.200 2-2.500 2h-21C3.200 28 2.500 27.300 2 26z" fill="url(#gMount)" />
            <path d="M7 28l8-8 8 8z" fill="#12549e" fillOpacity=".55" />
            <circle cx="22" cy="6.500" r="2.500" fill="#eaf2fb" />
          </Art>
        }
      />
    </>
  );
}

function Taskbar() {
  return (
    <div
      className={`${SEGOE} flex h-[60px] shrink-0 items-center border-t border-[#aeb3b6] bg-linear-to-r from-[#d9e3e9] via-[#e9e4dc] via-50% to-[#dae4e9] to-75% text-[#1b1b1b]`}
    >
      <div className="flex w-[474.500px] items-center pb-[4px] pl-[27px]">
        <div className="relative h-9 w-[26px]">
          <Art w={34} h={36}>
            <circle cx="13" cy="19.500" r="12" fill="url(#gSun)" />
            <circle cx="21.500" cy="7" r="10" fill="#c42b1c" />
          </Art>
          <span className="absolute top-[-3px] left-[18px] text-[13px] leading-5 text-white">1</span>
        </div>
        <div className="ml-[11px] text-[14.900px] leading-5 tracking-[-0.25px]">
          <div className="tracking-[-0.6px]">33°C</div>
          <div className="text-[#5b6164]">Sunny</div>
        </div>
      </div>
      <Art w={30} h={30}>
        <rect x="0" y="0" width="14.300" height="14.300" rx="1" fill="url(#gWin)" />
        <rect x="15.200" y="0" width="14.300" height="14.300" rx="1" fill="url(#gWin)" />
        <rect x="0" y="15.200" width="14.300" height="14.300" rx="1" fill="#0f7bd6" />
        <rect x="15.200" y="15.200" width="14.300" height="14.300" rx="1" fill="#0a6fcf" />
      </Art>
      <div className="ml-[17px] flex h-[39px] w-[273px] items-center overflow-hidden rounded-full bg-[#f8f8f7] pr-[2px] pl-[12px] shadow-[0_0_2px_rgba(0,0,0,0.45)]">
        <Line w={22} h={22}>
          <circle cx="9.500" cy="9" r="6.500" strokeWidth="2" />
          <path d="M14 14.500l5 5" strokeWidth="2.300" />
        </Line>
        <span className="ml-[11px] text-[16.800px] tracking-[-0.35px] text-[#5b5b5b]">Search</span>
        <Bear />
      </div>
      <div className="ml-[3px] flex items-center">
        <Apps />
      </div>
      <div className="ml-auto flex items-center pr-[23px]">
        <Line w={18} h={18}>
          <path d="M3 12l6-6 6 6" strokeWidth="1.600" />
        </Line>
        <Art w={22} h={18} className="ml-[20px]">
          <path d="M5.500 15.500a4 4 0 0 1-.6-8A6.300 6.300 0 0 1 17 7.500a4 4 0 0 1-.2 8z" fill="#e8e8e8" stroke="#222" strokeWidth="1.400" />
          <path d="M2.500 11a3.500 3.500 0 0 1 3-3A5.500 5.500 0 0 1 16 7.500z" fill="#9c9c9c" />
        </Art>
        <div className="ml-[17px] w-10 pb-[2px] text-center text-[14.800px] leading-5 tracking-[-0.5px]">
          <div>ENG</div>
          <div>IN</div>
        </div>
        <Line w={22} h={22} className="ml-[16px]">
          <path d="M1.500 8a13.500 13.500 0 0 1 19 0" stroke="#aab0b4" strokeWidth="1.500" />
          <path d="M4 11.500a10 10 0 0 1 14 0M7 14.800a6 6 0 0 1 8 0" strokeWidth="1.500" />
          <circle cx="11" cy="17" r="1.500" fill="currentColor" />
        </Line>
        <Line w={24} h={22} className="ml-[6.500px]">
          <path d="M2 8.200h3l5-4.500v14.600l-5-4.500H2zM13 8.300a4 4 0 0 1 0 5.400M16 5.800a8 8 0 0 1 0 10.400M19 3.500a11.500 11.500 0 0 1 0 15" />
        </Line>
        <Line w={22} h={16} className="ml-[7.500px]">
          <rect x="1.500" y="2" width="16" height="11.500" rx="2.500" strokeWidth="1.500" />
          <rect x="4" y="4.500" width="7.500" height="6.500" rx="1" fill="currentColor" stroke="none" />
          <path d="M19.500 6v3.500" strokeWidth="2" />
        </Line>
        <div className="ml-[16px] w-[80px] pb-[4px] text-right text-[15.200px] leading-5 tracking-[-0.15px] whitespace-nowrap">
          <div className="tracking-[-0.350px]">03:19 PM</div>
          <div>27-02-2024</div>
        </div>
        <Line w={22} h={22} className="ml-[9px]">
          <path d="M9.500 3.500C6 4 4.500 7 4.500 10v3.500L2 17.500h16.500l-2-4M8 18a2.500 2.500 0 0 0 5 0" strokeWidth="1.400" />
          <path d="M9.500 7.500h4l-4 5.500h4M14.500 2h4l-4 4.500h4" strokeWidth="1.500" />
        </Line>
      </div>
    </div>
  );
}

export default function App() {
  return (
    <div className="flex h-[1080px] w-[1920px] flex-col overflow-hidden bg-[#f7f7f7]">
      <Gradients />
      <TabStrip />
      <Toolbar />
      <div className="flex h-[932px] shrink-0 pl-[5px]">
        <Page />
        <EdgeRail />
      </div>
      <Taskbar />
    </div>
  );
}
